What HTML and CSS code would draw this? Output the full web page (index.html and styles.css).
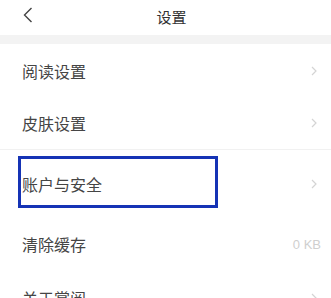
FILE: index.html
```html
<!DOCTYPE html>
<html lang="zh">

<head>
  <meta charset="UTF-8" />
  <meta name="viewport" content="width=device-width, initial-scale=1" />
  <title>设置</title>
  <link rel="stylesheet" href="styles.css">
</head>

<body>

  <header class="topbar">
    <svg class="back" width="10" height="16" viewBox="0 0 10 16">
      <polyline points="8.5,1 1.5,8 8.5,15" fill="none" stroke="#444" stroke-width="1.4" />
    </svg>
    <span class="title">设置</span>
  </header>

  <div class="band"></div>

  <div class="list">
    <div class="row row-a">
      <span class="label">阅读设置</span>
      <svg class="arrow" width="6" height="10" viewBox="0 0 6 10">
        <polyline points="1,1 5,5 1,9" fill="none" stroke="#d4d4d4" stroke-width="1.2" />
      </svg>
    </div>
    <div class="row row-b">
      <span class="label">皮肤设置</span>
      <svg class="arrow" width="6" height="10" viewBox="0 0 6 10">
        <polyline points="1,1 5,5 1,9" fill="none" stroke="#d4d4d4" stroke-width="1.2" />
      </svg>
    </div>
    <div class="row row-c">
      <span class="label">账户与安全</span>
      <svg class="arrow" width="6" height="10" viewBox="0 0 6 10">
        <polyline points="1,1 5,5 1,9" fill="none" stroke="#d4d4d4" stroke-width="1.2" />
      </svg>
      <div class="highlight"></div>
    </div>
    <div class="row row-d">
      <span class="label">清除缓存</span>
      <span class="value">0 KB</span>
    </div>
    <div class="row row-e">
      <span class="label">关于掌阅</span>
      <svg class="arrow" width="6" height="10" viewBox="0 0 6 10">
        <polyline points="1,1 5,5 1,9" fill="none" stroke="#d4d4d4" stroke-width="1.2" />
      </svg>
    </div>
  </div>

</body>

</html>
```

FILE: styles.css
```css
body {
  margin: 0;
  padding: 0;
  background: #fff;
  font-family: "Noto Sans CJK SC", "Noto Sans", sans-serif;
  overflow: hidden;
}

.topbar {
  height: 35px;
  display: flex;
  align-items: center;
  justify-content: center;
  position: relative;
}

.back {
  position: absolute;
  left: 23px;
  top: 7px;
}

.title {
  font-size: 15px;
  color: #333;
  margin-left: 12px;
  margin-top: -3px;
}

.band {
  height: 9px;
  background: #f3f3f3;
}

.row {
  display: flex;
  align-items: center;
  justify-content: space-between;
  padding: 0 10px 0 22px;
  position: relative;
  box-sizing: border-box;
}

.row-a {
  height: 53px;
}

.row-b {
  height: 53px;
  border-bottom: 1px solid #f1f1f1;
}

.row-c {
  height: 66px;
  padding-top: 2px;
}

.row-d {
  height: 56px;
}

.row-e {
  height: 50px;
  padding-top: 2px;
}

.label {
  font-size: 16px;
  color: #454545;
}

.arrow {
  margin-right: 4px;
}

.value {
  font-size: 13px;
  color: #cfcfcf;
  font-family: "Liberation Sans", sans-serif;
}

.highlight {
  position: absolute;
  left: 18px;
  top: 6px;
  width: 200px;
  height: 52px;
  border: 3px solid #1533b5;
  box-sizing: border-box;
}
```
